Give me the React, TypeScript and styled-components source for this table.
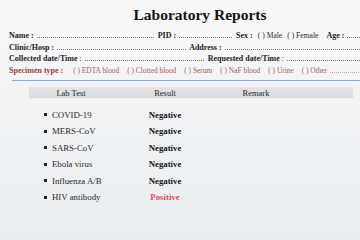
import React from 'react';
import styled, { createGlobalStyle } from 'styled-components';

const GlobalStyle = createGlobalStyle`
  html, body {
    margin: 0;
    padding: 0;
    background: #f2f4f6;
  }
  body {
    font-family: 'Liberation Serif', 'Times New Roman', serif;
    color: #1c1c1c;
  }
`;

interface TestResult {
  name: string;
  result: string;
  positive?: boolean;
}

const results: TestResult[] = [
  { name: 'COVID-19', result: 'Negative' },
  { name: 'MERS-CoV', result: 'Negative' },
  { name: 'SARS-CoV', result: 'Negative' },
  { name: 'Ebola virus', result: 'Negative' },
  { name: 'Influenza A/B', result: 'Negative' },
  { name: 'HIV antibody', result: 'Positive', positive: true },
];

const specimens = ['EDTA blood', 'Clotted blood', 'Serum', 'NaF blood', 'Urine', 'Other'];

const App: React.FC = () => {
  return (
    <>
      <GlobalStyle />
      <Sheet>
        <Title>Laboratory Reports</Title>

        <Fields>
          <InfoRow>
            <Label>Name :</Label>
            <Dots $w={118} />
            <Label>PID :</Label>
            <Dots $w={54} />
            <Label>Sex :</Label>
            <Choice $dark>( ) Male</Choice>
            <Choice $dark>( ) Female</Choice>
            <Label $gap={5}>Age :</Label>
            <Dots />
          </InfoRow>

          <InfoRow>
            <Label>Clinic/Hosp :</Label>
            <Dots $w={129} />
            <Label>Address :</Label>
            <Dots />
          </InfoRow>

          <InfoRow>
            <Label>Collected date/Time</Label>
            <Colon>:</Colon>
            <Dots $w={120} />
            <Label>Requested date/Time</Label>
            <Colon>:</Colon>
            <Dots />
          </InfoRow>

          <InfoRow>
            <SpecimenLabel>Specimen type :</SpecimenLabel>
            {specimens.map((s, i) => (
              <Choice key={s} $gap={i === 0 ? 2 : 5}>
                ( ) {s}
              </Choice>
            ))}
            <Dots $light />
          </InfoRow>
        </Fields>

        <Divider />

        <Table>
          <HeaderRow>
            <HeadCell>Lab Test</HeadCell>
            <HeadCell>Result</HeadCell>
            <HeadCell>Remark</HeadCell>
            <HeadCell />
          </HeaderRow>
          <Rows>
            {results.map((r) => (
              <ResultRow key={r.name}>
                <TestName>
                  <Bullet />
                  {r.name}
                </TestName>
                <ResultCell $positive={r.positive}>{r.result}</ResultCell>
                <span />
                <span />
              </ResultRow>
            ))}
          </Rows>
        </Table>
      </Sheet>
    </>
  );
};

const Sheet = styled.div`
  width: 360px;
  height: 240px;
  overflow: hidden;
  background: linear-gradient(180deg, #f7f8f9 0%, #f1f3f5 45%, #ebeef1 100%);
`;

const Title = styled.h1`
  margin: 0;
  padding: 5px 0 0 40px;
  height: 22px;
  line-height: 20px;
  font-size: 15.5px;
  font-weight: 700;
  text-align: center;
  color: #141414;
`;

const Fields = styled.div`
  padding-top: 3px;
`;

const InfoRow = styled.div`
  display: flex;
  align-items: baseline;
  gap: 3px;
  height: 11.7px;
  line-height: 11.7px;
  padding-left: 9px;
  white-space: nowrap;
  overflow: hidden;
`;

const Label = styled.span<{ $gap?: number }>`
  font-size: 8px;
  font-weight: 700;
  flex-shrink: 0;
  margin-left: ${(p) => p.$gap || 0}px;
`;

const Colon = styled.span`
  font-size: 8px;
  margin-left: -1px;
  flex-shrink: 0;
`;

/* dotted leader that sits on the text baseline */
const Dots = styled.span<{ $w?: number; $light?: boolean }>`
  display: inline-block;
  height: 1px;
  background-image: linear-gradient(
    to right,
    ${(p) => (p.$light ? '#c7a3a1' : '#777')} 50%,
    transparent 50%
  );
  background-size: 2px 1px;
  background-repeat: repeat-x;
  ${(p) => (p.$w ? `flex: 0 0 ${p.$w}px;` : 'flex: 1 1 0;')}
`;

const Choice = styled.span<{ $dark?: boolean; $gap?: number }>`
  font-size: ${(p) => (p.$dark ? 7.6 : 7.4)}px;
  color: ${(p) => (p.$dark ? '#2a2a2a' : '#b25a55')};
  margin-left: ${(p) => p.$gap ?? 2}px;
  flex-shrink: 0;
`;

const SpecimenLabel = styled.span`
  font-size: 8px;
  font-weight: 700;
  color: #a8393a;
  margin-right: 5px;
  flex-shrink: 0;
`;

const Divider = styled.div`
  margin: 3px 0 0 12px;
  height: 1.5px;
  background: #8fb0d2;
`;

const Table = styled.div`
  margin: 6px 7px 0 29px;
`;

const columns = '84px 104px 78px 1fr';

const HeaderRow = styled.div`
  display: grid;
  grid-template-columns: ${columns};
  height: 11px;
  align-items: center;
  background: linear-gradient(180deg, #e2e4e6 0%, #d9dbde 100%);
`;

const HeadCell = styled.span`
  font-size: 8.5px;
  text-align: center;
  color: #2b2b2b;
`;

const Rows = styled.div`
  padding-top: 8px;
`;

const ResultRow = styled.div`
  display: grid;
  grid-template-columns: ${columns};
  height: 16.5px;
  align-items: center;
`;

const TestName = styled.span`
  display: flex;
  align-items: center;
  padding-left: 15px;
  font-size: 8.8px;
  color: #2a2a2a;
`;

const Bullet = styled.i`
  display: inline-block;
  width: 3px;
  height: 3px;
  background: #222;
  margin-right: 5px;
`;

const ResultCell = styled.span<{ $positive?: boolean }>`
  font-size: 8.8px;
  font-weight: 700;
  text-align: center;
  color: ${(p) => (p.$positive ? '#e24d5e' : '#141414')};
`;

export default App;
